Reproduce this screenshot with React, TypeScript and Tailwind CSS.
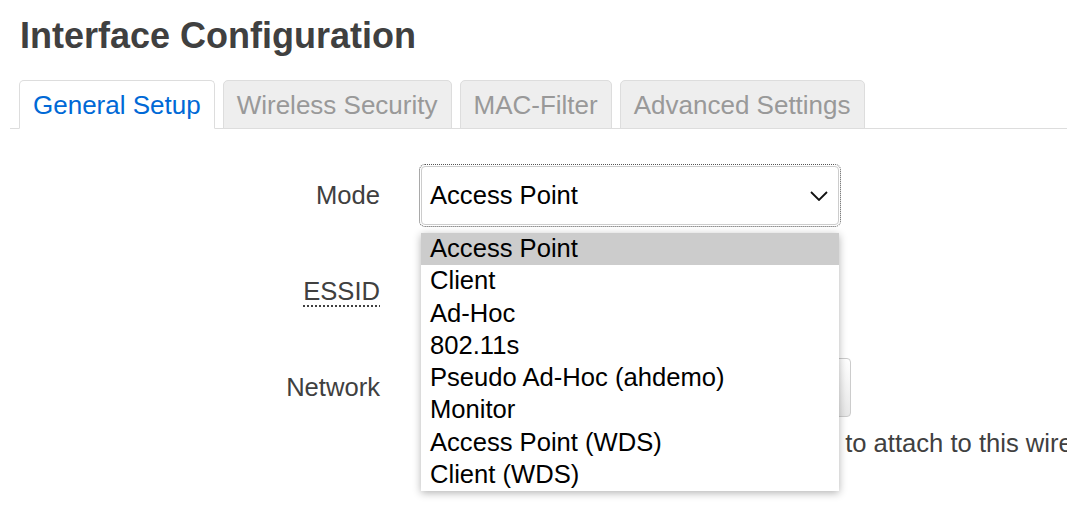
import React from 'react';

const modes = [
  'Access Point',
  'Client',
  'Ad-Hoc',
  '802.11s',
  'Pseudo Ad-Hoc (ahdemo)',
  'Monitor',
  'Access Point (WDS)',
  'Client (WDS)',
];

const tabs = ['General Setup', 'Wireless Security', 'MAC-Filter', 'Advanced Settings'];

const Chevron = () => (
  <svg width="18" height="10" viewBox="0 0 18 10" fill="none">
    <path d="M1 1 L9 9 L17 1" stroke="#111" strokeWidth="1.8" />
  </svg>
);

const App: React.FC = () => {
  return (
    <div
      className="relative h-[525px] w-full overflow-hidden bg-white text-[#404040]"
      style={{ fontFamily: '"Liberation Sans", Arial, sans-serif' }}
    >
      {/* Page title */}
      <h2 className="ml-[20px] mt-[14px] text-[36px] font-bold leading-[44px] text-[#404040]">
        Interface Configuration
      </h2>

      {/* Tabs */}
      <ul className="ml-[10px] mt-[22px] flex items-end border-b border-[#dddddd] pl-[9px]">
        {tabs.map((t, i) => (
          <li
            key={t}
            className={
              i === 0
                ? '-mb-px mr-[8px] h-[49px] rounded-t-[5px] border border-[#dddddd] border-b-white bg-white px-[13px] pt-[2px] text-[26px] leading-[45px] text-[#0069d6]'
                : '-mb-px mr-[8px] h-[49px] rounded-t-[5px] border border-[#dddddd] bg-[#eeeeee] px-[13px] pt-[2px] text-[26px] leading-[45px] text-[#999999]'
            }
          >
            {t}
          </li>
        ))}
      </ul>

      {/* Form */}
      <div className="mt-[37px] flex flex-col text-[25.6px]">
        <div className="flex h-[59px] items-center">
          <div className="w-[380px] text-right">Mode</div>
          <div className="ml-[41px] flex h-[59px] w-[418px] items-center justify-between rounded-[4px] border border-[#cccccc] pl-[8px] pr-[10px] text-black outline outline-1 outline-offset-1 outline-dotted outline-[#555]">
            <span>Access Point</span>
            <Chevron />
          </div>
        </div>

        <div className="mt-[37px] flex h-[59px] items-center">
          <div className="w-[380px] text-right">
            <span className="underline decoration-dotted decoration-2 underline-offset-[5px]">ESSID</span>
          </div>
          <div className="ml-[41px] h-[59px] w-[418px] rounded-[4px] border border-[#cccccc]" />
        </div>

        <div className="mt-[37px] flex h-[59px] items-center">
          <div className="w-[380px] text-right">Network</div>
          <div className="ml-[41px] h-[59px] w-[430px] rounded-[4px] border border-[#cccccc] bg-gradient-to-b from-white to-[#e8e8e8]" />
        </div>

        <div className="ml-[471px] mt-[10px] whitespace-nowrap leading-[32px] text-[#404040]">
          Choose the network(s) you want to attach to this wireless interface or fill out the custom field to define a new network.
        </div>
      </div>

      {/* Open dropdown list */}
      <ul className="absolute left-[421px] top-[233px] w-[418px] bg-white text-[25.6px] leading-[32.25px] text-black shadow-[0_2px_8px_rgba(0,0,0,0.3)]">
        {modes.map((m, i) => (
          <li key={m} className={i === 0 ? 'bg-[#cccccc] pl-[9px]' : 'pl-[9px]'}>
            <span className="relative -top-px">{m}</span>
          </li>
        ))}
      </ul>
    </div>
  );
};

export default App;
